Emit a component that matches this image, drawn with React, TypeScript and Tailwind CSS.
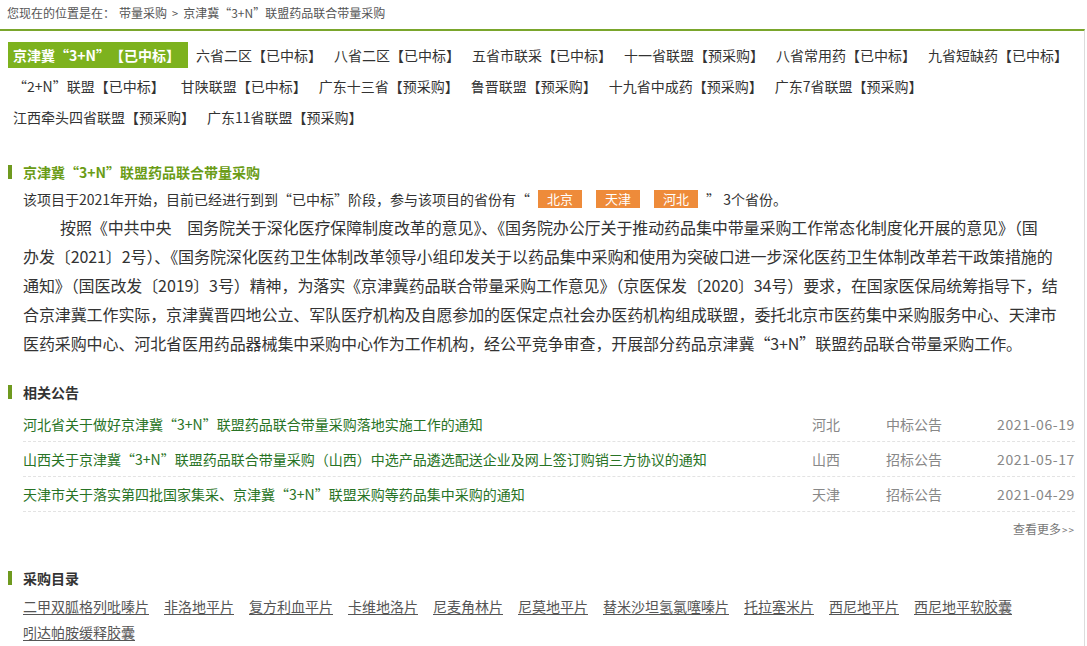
import React from "react";

const row1 = ["六省二区【已中标】", "八省二区【已中标】", "五省市联采【已中标】", "十一省联盟【预采购】", "八省常用药【已中标】", "九省短缺药【已中标】"];
const row2 = ["甘陕联盟【已中标】", "广东十三省【预采购】", "鲁晋联盟【预采购】", "十九省中成药【预采购】", "广东7省联盟【预采购】"];
const row3 = ["江西牵头四省联盟【预采购】", "广东11省联盟【预采购】"];

const notices = [
  { t: "河北省关于做好京津冀“3+N”联盟药品联合带量采购落地实施工作的通知", r: "河北", k: "中标公告", d: "2021-06-19" },
  { t: "山西关于京津冀“3+N”联盟药品联合带量采购（山西）中选产品遴选配送企业及网上签订购销三方协议的通知", r: "山西", k: "招标公告", d: "2021-05-17" },
  { t: "天津市关于落实第四批国家集采、京津冀“3+N”联盟采购等药品集中采购的通知", r: "天津", k: "招标公告", d: "2021-04-29" },
];

const drugs = ["二甲双胍格列吡嗪片", "非洛地平片", "复方利血平片", "卡维地洛片", "尼麦角林片", "尼莫地平片", "替米沙坦氢氯噻嗪片", "托拉塞米片", "西尼地平片", "西尼地平软胶囊", "吲达帕胺缓释胶囊"];

const lines = [
  "按照《中共中央　国务院关于深化医疗保障制度改革的意见》、《国务院办公厅关于推动药品集中带量采购工作常态化制度化开展的意见》（国",
  "办发〔2021〕2号）、《国务院深化医药卫生体制改革领导小组印发关于以药品集中采购和使用为突破口进一步深化医药卫生体制改革若干政策措施的",
  "通知》（国医改发〔2019〕3号）精神，为落实《京津冀药品联合带量采购工作意见》（京医保发〔2020〕34号）要求，在国家医保局统筹指导下，结",
  "合京津冀工作实际，京津冀晋四地公立、军队医疗机构及自愿参加的医保定点社会办医药机构组成联盟，委托北京市医药集中采购服务中心、天津市",
  "医药采购中心、河北省医用药品器械集中采购中心作为工作机构，经公平竞争审查，开展部分药品京津冀“3+N”联盟药品联合带量采购工作。",
];

function LQ() {
  return <span className="inline-block w-[14px] text-right">“</span>;
}
function RQ() {
  return <span className="inline-block w-[14px] text-left">”</span>;
}

function Heading({ children, green }: { children: React.ReactNode; green?: boolean }) {
  return (
    <div className="flex items-center h-[20px] pl-[8px]">
      <span className="w-[4px] h-[14px] bg-[#6f9a1f]" />
      <span className={`ml-[11px] text-[14px] font-bold leading-[20px] whitespace-nowrap ${green ? "text-[#6a9c16]" : "text-[#333]"}`}>{children}</span>
    </div>
  );
}

function Tab({ children, extra = "" }: { children: React.ReactNode; extra?: string }) {
  return <span className={`h-[26px] leading-[26px] px-[5px] mr-[2px] ${extra}`}>{children}</span>;
}

export default function App() {
  return (
    <div className="w-[1087px] h-[646px] overflow-hidden bg-white font-['Noto_Sans_CJK_SC','Microsoft_YaHei',sans-serif] text-[#333]">
      <div className="h-[29px] flex items-center pb-[3px] px-[7px] text-[12px] text-[#555] whitespace-nowrap">
        您现在的位置是在：<span className="ml-[4px]">带量采购</span>
        <span className="mx-[5px] text-[11px]">&gt;</span>
        <span>京津冀“3+N”联盟药品联合带量采购</span>
      </div>
      <div className="w-[1085px] border-t-2 border-t-[#7aa62c] border-r border-r-[#dcdcdc] pb-[40px]">
        <div className="pt-[11px] pl-[8px] text-[14px] text-[#333] whitespace-nowrap">
          <div className="flex h-[26px] mb-[5px] items-center">
            <span className="w-[180px] h-[26px] leading-[26px] px-[5px] bg-[#7db21e] text-white font-bold mr-[3px]">
              京津冀<LQ />3+N<RQ />【已中标】
            </span>
            {row1.map((s) => (
              <Tab key={s}>{s}</Tab>
            ))}
          </div>
          <div className="flex h-[26px] mb-[5px] items-center">
            <Tab extra="pr-[9px]">
              <LQ />2+N<RQ />联盟【已中标】
            </Tab>
            {row2.map((s) => (
              <Tab key={s}>{s}</Tab>
            ))}
          </div>
          <div className="flex h-[26px] mb-[5px] items-center">
            {row3.map((s) => (
              <Tab key={s}>{s}</Tab>
            ))}
          </div>
        </div>

        <div className="mt-[32px]">
          <Heading green>
            京津冀<LQ />3+N<RQ />联盟药品联合带量采购
          </Heading>
          <div className="mt-[5px] pl-[23px] h-[24px] flex items-center text-[14px] text-[#333] whitespace-nowrap">
            <span>该项目于2021年开始，目前已经进行到到“已中标”阶段，参与该项目的省份有“</span>
            <span className="ml-[8px] w-[44px] h-[18px] leading-[18px] text-center text-[13px] bg-[#ee8b3a] text-white">北京</span>
            <span className="ml-[14px] w-[44px] h-[18px] leading-[18px] text-center text-[13px] bg-[#ee8b3a] text-white">天津</span>
            <span className="ml-[14px] w-[44px] h-[18px] leading-[18px] text-center text-[13px] bg-[#ee8b3a] text-white">河北</span>
            <span className="ml-[8px]">” 3个省份。</span>
          </div>
          <div className="mt-[2px] pl-[23px] pr-[12px] text-[16px] leading-[29px] text-[#333]">
            {lines.map((l, i) => (
              <div key={i} className={`whitespace-nowrap tracking-[-0.1px] ${i === 0 ? "pl-[37px]" : ""}`}>{l}</div>
            ))}
          </div>
        </div>

        <div className="mt-[24px]">
          <Heading>相关公告</Heading>
          <div className="mt-[5px] pl-[23px] pr-[9px]">
            {notices.map((n) => (
              <div key={n.d} className="flex items-center h-[35px] border-b border-dashed border-b-[#e3e3e3] text-[14px] whitespace-nowrap">
                <span className="flex-1 text-[#287325]">{n.t}</span>
                <span className="w-[74px] text-[#888]">{n.r}</span>
                <span className="w-[89px] text-[#888]">{n.k}</span>
                <span className="w-[100px] text-right text-[#888] tracking-[0.6px]">{n.d}</span>
              </div>
            ))}
            <div className="h-[34px] flex items-center justify-end text-[12px] text-[#777]">
              查看更多<span className="text-[10px] tracking-[1px] ml-[1px]">&gt;&gt;</span>
            </div>
          </div>
        </div>

        <div className="mt-[22px]">
          <Heading>采购目录</Heading>
          <div className="mt-[5px] pl-[23px] pr-[9px] flex flex-wrap gap-x-[15px] text-[14px] leading-[26px]">
            {drugs.map((d) => (
              <span key={d} className="underline text-[#555] underline-offset-[2px]">{d}</span>
            ))}
          </div>
        </div>
      </div>
    </div>
  );
}
